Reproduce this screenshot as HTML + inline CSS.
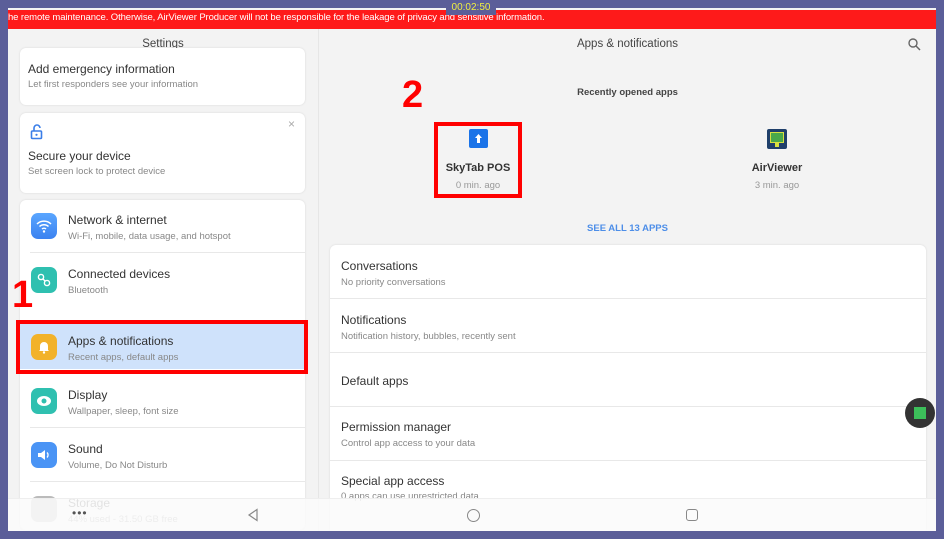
<!DOCTYPE html>
<html><head><meta charset="utf-8"><style>
*{margin:0;padding:0;box-sizing:border-box}
body{width:944px;height:539px;background:#5b5e99;font-family:"Liberation Sans",sans-serif;position:relative;overflow:hidden}
.a{position:absolute}
.scr{left:8px;top:8px;width:928px;height:523px;background:#f3f3f3;overflow:hidden}
.t{font-size:12px;color:#333}
.s{font-size:9.5px;color:#888}
.card{background:#fff;border-radius:6px;box-shadow:0 0 2px rgba(0,0,0,.12)}
.ic{width:26px;height:26px;border-radius:7px}
.hr{height:1px;background:#e8e8e8}
</style></head><body>
<div class="a scr">
  <div class="a" style="left:0;top:2px;width:928px;height:19px;background:#fe1a1a"></div>
  <div class="a" style="left:0;top:4px;font-size:9.5px;color:#fff;white-space:nowrap;letter-spacing:-.1px">he remote maintenance. Otherwise, AirViewer Producer will not be responsible for the leakage of privacy and sensitive information.</div>
  <div class="a" style="left:0;top:21px;width:310px;height:502px;background:#f3f3f3"></div>
  <div class="a" style="left:310px;top:21px;width:1px;height:502px;background:#e6e6e6"></div>
  <div class="a t" style="left:0;top:30px;width:310px;text-align:center;font-size:11.5px;color:#444">Settings</div>
  <div class="a card" style="left:12px;top:40px;width:285px;height:57px"></div>
  <div class="a t" style="left:20px;top:54px">Add emergency information</div>
  <div class="a s" style="left:20px;top:71px">Let first responders see your information</div>
  <div class="a card" style="left:12px;top:105px;width:285px;height:80px"></div>
  <svg class="a" style="left:22px;top:116px" width="14" height="16" viewBox="0 0 14 16"><path d="M4 7V4a3 3 0 0 1 6 0" fill="none" stroke="#3b7ee8" stroke-width="1.6"/><rect x="1.5" y="7" width="10" height="7.5" rx="1" fill="none" stroke="#3b7ee8" stroke-width="1.6"/><circle cx="6.5" cy="10.8" r="1.1" fill="#3b7ee8"/></svg>
  <div class="a" style="left:280px;top:109px;font-size:12px;color:#aaa">×</div>
  <div class="a t" style="left:20px;top:141px">Secure your device</div>
  <div class="a s" style="left:20px;top:158px">Set screen lock to protect device</div>
  <div class="a card" style="left:12px;top:192px;width:285px;height:330px"></div>
  <div class="a ic" style="left:23px;top:205px;background:linear-gradient(#5aa6ff,#3b82f0)"></div>
  <svg class="a" style="left:27px;top:210px" width="18" height="16" viewBox="0 0 18 16"><path d="M2 6a10 10 0 0 1 14 0M4.5 8.5a6.5 6.5 0 0 1 9 0M7 11a3 3 0 0 1 4 0" fill="none" stroke="#fff" stroke-width="1.5"/><circle cx="9" cy="13.5" r="1.2" fill="#fff"/></svg>
  <div class="a t" style="left:60px;top:205px">Network &amp; internet</div>
  <div class="a s" style="left:60px;top:223px">Wi-Fi, mobile, data usage, and hotspot</div>
  <div class="a hr" style="left:22px;top:244px;width:275px"></div>
  <div class="a ic" style="left:23px;top:259px;background:#2fc0b0"></div>
  <svg class="a" style="left:27px;top:263px" width="18" height="18" viewBox="0 0 18 18"><circle cx="6" cy="6" r="2.6" fill="none" stroke="#fff" stroke-width="1.4"/><circle cx="12" cy="12" r="2.6" fill="none" stroke="#fff" stroke-width="1.4"/><path d="M8 8l2 2" stroke="#fff" stroke-width="1.4"/></svg>
  <div class="a t" style="left:60px;top:259px">Connected devices</div>
  <div class="a s" style="left:60px;top:277px">Bluetooth</div>
  <div class="a" style="left:12px;top:316px;width:285px;height:45px;background:#cfe2fb"></div>
  <div class="a ic" style="left:23px;top:326px;background:#f2b22a"></div>
  <svg class="a" style="left:30px;top:332px" width="12" height="14" viewBox="0 0 12 14"><path d="M2 10V6a4 4 0 0 1 8 0v4l1 1H1z" fill="#fff"/><circle cx="6" cy="12.5" r="1.2" fill="#fff"/></svg>
  <div class="a t" style="left:60px;top:326px">Apps &amp; notifications</div>
  <div class="a s" style="left:60px;top:344px">Recent apps, default apps</div>
  <div class="a ic" style="left:23px;top:380px;background:#2fc0b0"></div>
  <svg class="a" style="left:28px;top:386px" width="16" height="14" viewBox="0 0 16 14"><ellipse cx="8" cy="7" rx="7" ry="5" fill="#fff"/><circle cx="8" cy="7" r="2.5" fill="#2fc0b0"/></svg>
  <div class="a t" style="left:60px;top:380px">Display</div>
  <div class="a s" style="left:60px;top:398px">Wallpaper, sleep, font size</div>
  <div class="a hr" style="left:22px;top:419px;width:275px"></div>
  <div class="a ic" style="left:23px;top:434px;background:#4a94f5"></div>
  <svg class="a" style="left:29px;top:440px" width="14" height="14" viewBox="0 0 14 14"><path d="M1 5h3l4-3v10l-4-3H1z" fill="#fff"/><path d="M10 4.5a3.5 3.5 0 0 1 0 5" fill="none" stroke="#fff" stroke-width="1.3"/></svg>
  <div class="a t" style="left:60px;top:434px">Sound</div>
  <div class="a s" style="left:60px;top:452px">Volume, Do Not Disturb</div>
  <div class="a hr" style="left:22px;top:473px;width:275px"></div>
  <div class="a ic" style="left:23px;top:488px;background:#bbb"></div>
  <div class="a t" style="left:60px;top:488px">Storage</div>
  <div class="a s" style="left:60px;top:506px">44% used - 31.50 GB free</div>
  <div class="a" style="left:311px;top:30px;width:617px;text-align:center;font-size:11.5px;color:#444">Apps &amp; notifications</div>
  <svg class="a" style="left:900px;top:30px" width="13" height="13" viewBox="0 0 13 13"><circle cx="5" cy="5" r="4" fill="none" stroke="#666" stroke-width="1.4"/><path d="M8 8l4 4" stroke="#666" stroke-width="1.5"/></svg>
  <div class="a" style="left:311px;top:79px;width:617px;text-align:center;font-size:9.5px;color:#444;font-weight:bold">Recently opened apps</div>
  <div class="a" style="left:461px;top:121px;width:19px;height:19px;background:#1a73e8;border-radius:2px"></div>
  <svg class="a" style="left:466px;top:125px" width="9" height="11" viewBox="0 0 9 11"><path d="M4.5 1L8 5H6v5H3V5H1z" fill="#fff"/></svg>
  <div class="a" style="left:410px;top:154px;width:120px;text-align:center;font-size:11px;color:#333;font-weight:bold">SkyTab POS</div>
  <div class="a" style="left:410px;top:172px;width:120px;text-align:center;font-size:9.5px;color:#999">0 min. ago</div>
  <div class="a" style="left:759px;top:121px;width:20px;height:20px;background:#1f3f6a;border-radius:2px"></div>
  <div class="a" style="left:762px;top:124px;width:14px;height:11px;background:#4aa84a;border:1px solid #d8e040"></div>
  <div class="a" style="left:767px;top:135px;width:4px;height:4px;background:#d8e040"></div>
  <div class="a" style="left:709px;top:154px;width:120px;text-align:center;font-size:11px;color:#333;font-weight:bold">AirViewer</div>
  <div class="a" style="left:709px;top:172px;width:120px;text-align:center;font-size:9.5px;color:#999">3 min. ago</div>
  <div class="a" style="left:311px;top:215px;width:617px;text-align:center;font-size:9.5px;color:#4d8ee8;font-weight:bold">SEE ALL 13 APPS</div>
  <div class="a card" style="left:322px;top:237px;width:596px;height:290px"></div>
  <div class="a t" style="left:333px;top:251px">Conversations</div>
  <div class="a s" style="left:333px;top:269px">No priority conversations</div>
  <div class="a hr" style="left:322px;top:290px;width:596px"></div>
  <div class="a t" style="left:333px;top:305px">Notifications</div>
  <div class="a s" style="left:333px;top:323px">Notification history, bubbles, recently sent</div>
  <div class="a hr" style="left:322px;top:344px;width:596px"></div>
  <div class="a t" style="left:333px;top:366px">Default apps</div>
  <div class="a hr" style="left:322px;top:398px;width:596px"></div>
  <div class="a t" style="left:333px;top:412px">Permission manager</div>
  <div class="a s" style="left:333px;top:430px">Control app access to your data</div>
  <div class="a hr" style="left:322px;top:452px;width:596px"></div>
  <div class="a t" style="left:333px;top:466px">Special app access</div>
  <div class="a s" style="left:333px;top:483px">0 apps can use unrestricted data</div>
  <div class="a" style="left:0;top:490px;width:928px;height:33px;background:rgba(250,250,250,.88);border-top:1px solid #eee"></div>
  <div class="a" style="left:64px;top:498px;font-size:12px;color:#555;letter-spacing:1px">•••</div>
  <svg class="a" style="left:239px;top:500px" width="12" height="14" viewBox="0 0 12 14"><path d="M10 1.5L2 7l8 5.5z" fill="none" stroke="#888" stroke-width="1.2"/></svg>
  <div class="a" style="left:459px;top:501px;width:13px;height:13px;border:1.2px solid #888;border-radius:50%"></div>
  <div class="a" style="left:678px;top:501px;width:12px;height:12px;border:1.2px solid #888;border-radius:3px"></div>
  <div class="a" style="left:897px;top:390px;width:30px;height:30px;border-radius:50%;background:#333"></div>
  <div class="a" style="left:906px;top:399px;width:12px;height:12px;background:#3cbf5a"></div>
</div>
<div class="a" style="left:446px;top:0;width:50px;height:15px;background:#5b5e99;color:#f0f040;font-size:10px;text-align:center;line-height:15px">00:02:50</div>
<div class="a" style="left:16px;top:320px;width:292px;height:54px;border:4px solid #f00"></div>
<div class="a" style="left:12px;top:276px;font-size:38px;font-weight:bold;color:#f00;line-height:1">1</div>
<div class="a" style="left:434px;top:122px;width:88px;height:76px;border:4px solid #f00"></div>
<div class="a" style="left:402px;top:76px;font-size:38px;font-weight:bold;color:#f00;line-height:1">2</div>
</body></html>
